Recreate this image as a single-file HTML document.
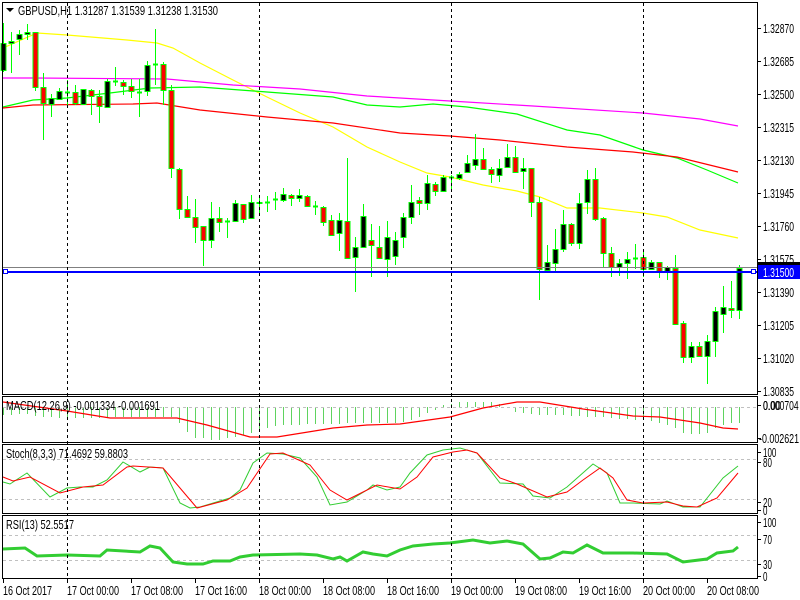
<!DOCTYPE html>
<html><head><meta charset="utf-8"><style>
html,body{margin:0;padding:0;background:#fff;width:800px;height:600px;overflow:hidden}
svg{display:block}
text{font-family:"Liberation Sans",sans-serif;font-size:12.5px;fill:#000}
</style></head><body>
<svg id="s" width="800" height="600" xmlns="http://www.w3.org/2000/svg">
<rect width="800" height="600" fill="#fff"/>
<g id="ma" fill="none" stroke-width="1.2">
<polyline stroke="#ffff00" points="3,48 37,33 67,35 127,40 157,43 173,48 200,63 233,80 267,97 300,113 333,127 367,147 400,162 427,173 450,177 483,185 517,191 540,197 567,208 600,208 643,213 667,217 700,230 738,238"/>
<polyline stroke="#ff00ff" points="3,78 33,78 167,79 233,85 300,89 367,96 400,98 450,101 533,106 643,113 700,119 738,126"/>
<polyline stroke="#00ff00" points="3,107 33,100 67,98 110,93 150,88 200,87 267,92 333,97 367,105 400,107 433,104 467,107 517,114 567,130 600,135 643,150 677,158 707,170 738,183"/>
<polyline stroke="#ff0000" points="3,108 33,105 133,104 157,103 200,110 267,117 333,123 400,133 450,136 500,140 567,147 633,152 677,157 738,172"/>
</g>
<g id="candles"></g>
<line x1="3" y1="267.5" x2="757" y2="267.5" stroke="#808080"/>
<line x1="3" y1="272" x2="757" y2="272" stroke="#0000ff" stroke-width="2"/>
<rect x="3.5" y="269.5" width="4" height="4" fill="#fff" stroke="#0000ff"/>
<rect x="751.5" y="269.5" width="4" height="4" fill="#fff" stroke="#0000ff"/>
<g id="macd"></g>
<line x1="3" y1="407.5" x2="757" y2="407.5" stroke="#c0c0c0" stroke-dasharray="3,3"/>
<polyline fill="none" stroke="#ff0000" stroke-width="1.2" points="3,402 67,411 110,418 177,418 207,425 250,437 277,437 333,428 367,425 400,424 450,417 483,408 517,402 540,402 583,409 633,416 660,417 700,423 723,428 738,429"/>
<line x1="3" y1="459.5" x2="757" y2="459.5" stroke="#c0c0c0" stroke-dasharray="3,3"/>
<line x1="3" y1="499.5" x2="757" y2="499.5" stroke="#c0c0c0" stroke-dasharray="3,3"/>
<polyline fill="none" stroke="#32cd32" stroke-width="1" points="3,482 10,484 27,473 50,497 67,488 80,487 93,487 107,480 123,462 140,472 150,467 163,468 180,503 190,508 200,507 230,498 240,490 253,463 267,453 283,454 300,458 317,477 330,505 347,502 367,490 373,485 387,490 400,487 410,473 427,455 443,450 460,448 477,453 500,483 523,484 533,496 550,498 567,487 593,464 607,473 620,503 633,503 660,504 667,501 683,507 700,507 723,478 738,466"/>
<polyline fill="none" stroke="#ff0000" stroke-width="1" points="3,477 13,481 30,477 60,493 83,487 103,485 127,467 133,466 163,468 197,508 227,500 247,488 270,454 283,453 310,465 330,490 347,500 377,485 400,489 417,477 433,457 453,452 467,450 477,453 500,478 517,484 547,497 567,492 583,480 600,468 613,478 627,500 643,503 667,502 683,506 697,507 717,498 738,473"/>
<line x1="3" y1="535.5" x2="757" y2="535.5" stroke="#c0c0c0" stroke-dasharray="3,3"/>
<line x1="3" y1="560.5" x2="757" y2="560.5" stroke="#c0c0c0" stroke-dasharray="3,3"/>
<polyline fill="none" stroke="#32cd32" stroke-width="3" points="3,549 25,548 37,556 67,555 100,556 107,550 140,552 150,546 160,548 173,562 187,564 203,564 213,561 230,561 240,557 253,555 300,554 317,555 333,559 340,557 347,561 363,552 373,554 387,556 400,550 413,546 433,544 450,543 473,540 490,543 507,541 523,544 540,559 550,558 563,552 573,553 587,545 603,553 633,553 667,554 683,562 707,559 717,553 733,551 738,547"/>
<g id="seps" stroke="#000" stroke-dasharray="3,3">
<line x1="67.5" y1="3" x2="67.5" y2="579"/><line x1="259.5" y1="3" x2="259.5" y2="579"/><line x1="451.5" y1="3" x2="451.5" y2="579"/><line x1="643.5" y1="3" x2="643.5" y2="579"/>
</g>
<g fill="none" stroke="#000">
<rect x="2.5" y="2.5" width="755" height="392"/>
<rect x="2.5" y="396.5" width="755" height="46"/>
<rect x="2.5" y="444.5" width="755" height="69"/>
<rect x="2.5" y="515.5" width="755" height="63"/>
</g>
<g id="ticks" stroke="#000"></g>
<polygon points="6,8 14,8 10,12" fill="#000"/>
<text x="18" y="15" textLength="200" lengthAdjust="spacingAndGlyphs">GBPUSD,H1  1.31287 1.31539 1.31238 1.31530</text>
<text x="6" y="410" textLength="154" lengthAdjust="spacingAndGlyphs">MACD(12,26,9) -0.001334 -0.001691</text>
<text x="6" y="458" textLength="122" lengthAdjust="spacingAndGlyphs">Stoch(8,3,3) 71.4692 59.8803</text>
<text x="6" y="529" textLength="68" lengthAdjust="spacingAndGlyphs">RSI(13) 52.5517</text>
<g id="pl"></g>
<rect x="758" y="262" width="42" height="8" fill="#000"/>
<rect x="758" y="265" width="42" height="14" fill="#0000ff"/>
<text x="763" y="277" style="fill:#fff" textLength="31" lengthAdjust="spacingAndGlyphs">1.31500</text>
<g id="tl"></g>
</svg>
<script>
var d=[[70,43,23,72],[43,41,32,73],[39,34,30,55],[34,32,24,40],[32,87,32,91],[87,103,73,140],[104,98,94,117],[99,91,88,100],[92,92,80,107],[92,103,85,105],[104,89,89,104],[90,96,89,115],[96,106,90,123],[107,81,79,108],[81,81,67,86],[82,86,80,95],[86,91,79,98],[92,92,79,117],[91,65,61,96],[64,64,29,85],[64,90,62,105],[90,168,85,178],[169,209,168,219],[209,217,196,218],[217,227,199,243],[226,240,226,266],[240,218,202,248],[218,222,207,232],[221,221,218,238],[221,203,200,222],[204,219,204,223],[218,202,195,219],[202,203,195,213],[202,202,196,212],[199,199,192,210],[200,194,188,202],[195,198,194,206],[198,195,189,202],[196,206,195,207],[206,206,201,215],[207,222,206,226],[220,235,215,236],[233,220,213,251],[221,258,158,258],[257,247,237,292],[247,216,204,247],[240,245,224,277],[247,258,226,258],[259,237,221,277],[256,240,232,265],[237,217,213,248],[217,202,185,224],[200,203,197,215],[203,183,175,210],[184,191,182,196],[191,177,175,191],[177,177,175,191],[178,174,172,180],[172,163,155,173],[165,159,134,170],[159,169,148,170],[169,174,167,183],[175,168,159,182],[167,157,144,167],[157,172,146,173],[171,168,158,189],[168,202,168,217],[202,269,197,300],[270,262,245,272],[263,249,229,272],[249,224,210,252],[224,243,223,246],[243,203,193,249],[202,179,170,214],[179,219,168,221],[218,253,217,267],[253,267,247,277],[267,263,259,276],[263,259,252,279],[258,258,244,269],[257,269,249,277],[269,262,260,270],[262,271,262,278],[271,267,266,280],[268,324,255,324],[323,357,321,363],[357,346,342,363],[346,356,342,357],[356,341,335,384],[341,311,307,357],[314,307,286,333],[308,310,281,318],[310,268,265,319]];
var h='';
d.forEach(function(c,i){var x=3+8*i,o=c[0],cl=c[1],t=Math.min(o,cl),b=Math.max(o,cl);
h+='<line x1="'+(x+.5)+'" y1="'+c[2]+'" x2="'+(x+.5)+'" y2="'+c[3]+'" stroke="#00ff00"/>';
if(b-t<1){h+='<line x1="'+(x-2)+'" y1="'+(t+.5)+'" x2="'+(x+3)+'" y2="'+(t+.5)+'" stroke="#00ff00" stroke-width="2"/>';}
else h+='<rect x="'+(x-2)+'" y="'+(t+.5)+'" width="5" height="'+(b-t)+'" fill="'+(cl<o?'#000':'#ff0000')+'" stroke="#00ff00"/>';});
document.getElementById('candles').innerHTML=h;
var m=[415,415,414,414,416,417,417,418,418,418,418,418,418,417,417,417,417,417,417,417,417,417,423,432,438,438,440,440,438,437,435,433,430,428,426,425,425,425,424,424,424,424,424,423,423,423,423,423,423,423,422,420,417,413,410,405,404,402,402,402,402,402,404,407,412,413,414,415,415,415,415,416,416,417,417,417,418,419,419,420,420,421,423,425,428,433,434,434,433,428,425,423,423];
h='';m.forEach(function(v,i){var x=3+8*i+.5;h+='<line x1="'+x+'" y1="407" x2="'+x+'" y2="'+v+'" stroke="#5fd35f"/>';});
document.getElementById('macd').innerHTML=h;
var p=[['1.32870',28],['1.32685',61],['1.32500',94],['1.32315',127],['1.32130',160],['1.31945',193],['1.31760',226],['1.31575',259],['1.31390',292],['1.31205',325],['1.31020',358],['1.30835',391],['0.000704',405],['0.00',405],['-0.002621',438],['100',452],['80',462],['20',502],['0',510],['100',522],['70',539],['30',564],['0',576]];
h='';var tk='';p.forEach(function(q){var s=q[0],w=s.length*4.45;if(s.length==7)w=31;h+='<text x="'+(s.charAt(0)=='-'?759:763)+'" y="'+(q[1]+5)+'" textLength="'+w+'" lengthAdjust="spacingAndGlyphs">'+s+'</text>';tk+='<line x1="757" y1="'+(q[1]+.5)+'" x2="761" y2="'+(q[1]+.5)+'"/>';});
document.getElementById('pl').innerHTML=h;
var t=['16 Oct 2017','17 Oct 00:00','17 Oct 08:00','17 Oct 16:00','18 Oct 00:00','18 Oct 08:00','18 Oct 16:00','19 Oct 00:00','19 Oct 08:00','19 Oct 16:00','20 Oct 00:00','20 Oct 08:00'];
h='';t.forEach(function(s,i){var x=3+64*i;h+='<text x="'+(x)+'" y="595" textLength="'+(i==0?49:52)+'" lengthAdjust="spacingAndGlyphs">'+s+'</text>';tk+='<line x1="'+(x+.5)+'" y1="579" x2="'+(x+.5)+'" y2="583"/>';});
document.getElementById('tl').innerHTML=h;document.getElementById('ticks').innerHTML=tk;
</script>
</body></html>
